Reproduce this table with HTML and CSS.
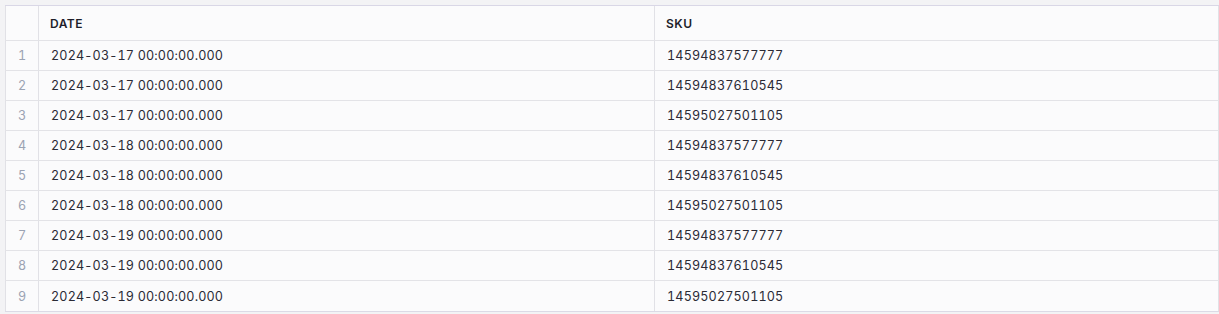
FILE: index.html
```html
<!DOCTYPE html>
<html>
<head>
<meta charset="utf-8">
<link rel="stylesheet" href="styles.css">
</head>
<body>
<div class="wrap">
<table class="grid">
<thead>
<tr><th class="idx"></th><th class="c-date">DATE</th><th class="c-sku">SKU</th></tr>
</thead>
<tbody>
<tr><td class="idx">1</td><td>2024-03-17 00:00:00.000</td><td>14594837577777</td></tr>
<tr><td class="idx">2</td><td>2024-03-17 00:00:00.000</td><td>14594837610545</td></tr>
<tr><td class="idx">3</td><td>2024-03-17 00:00:00.000</td><td>14595027501105</td></tr>
<tr><td class="idx">4</td><td>2024-03-18 00:00:00.000</td><td>14594837577777</td></tr>
<tr><td class="idx">5</td><td>2024-03-18 00:00:00.000</td><td>14594837610545</td></tr>
<tr><td class="idx">6</td><td>2024-03-18 00:00:00.000</td><td>14595027501105</td></tr>
<tr><td class="idx">7</td><td>2024-03-19 00:00:00.000</td><td>14594837577777</td></tr>
<tr><td class="idx">8</td><td>2024-03-19 00:00:00.000</td><td>14594837610545</td></tr>
<tr class="last"><td class="idx">9</td><td>2024-03-19 00:00:00.000</td><td>14595027501105</td></tr>
</tbody>
</table>
</div>
</body>
</html>
```
FILE: styles.css
```css
html, body {
  margin: 0;
  padding: 0;
  background: #f3f3f5;
}
.wrap {
  padding: 5px 0 0 5px;
}
.grid {
  border-collapse: collapse;
  table-layout: fixed;
  width: 1214px;
  background: #fbfbfc;
  font-family: Inter, "Noto Sans", sans-serif;
  font-size: 12px;
  color: #2a2a35;
  border-left: 1px solid #e1e1e6;
  border-right: 1px solid #e1e1e6;
  border-bottom: 1px solid #dcdae6;
}
.grid th, .grid td {
  padding: 0 0 0 11px;
  text-align: left;
  white-space: nowrap;
  border-left: 1px solid #e1e1e6;
  border-bottom: 1px solid #e3e3e7;
}
.grid th {
  height: 34px;
  font-weight: 600;
  font-size: 12px;
  letter-spacing: 0.5px;
  color: #1e1e2a;
  border-top: 1px solid #d9d7e6;
  border-bottom: 1px solid #e3e3e7;
}
.grid td {
  height: 29px;
  padding-left: 12px;
  font-size: 12.6px;
  letter-spacing: 0.15px;
  font-variant-numeric: tabular-nums;
}
.grid tr.last td {
  height: 30px;
  border-bottom: 1px solid #dcdae6;
}
.grid .idx {
  width: 32px;
  padding: 0;
  text-align: center;
  color: #9ba3b3;
  letter-spacing: 0;
}
.grid .c-date {
  width: 604px;
}
```
